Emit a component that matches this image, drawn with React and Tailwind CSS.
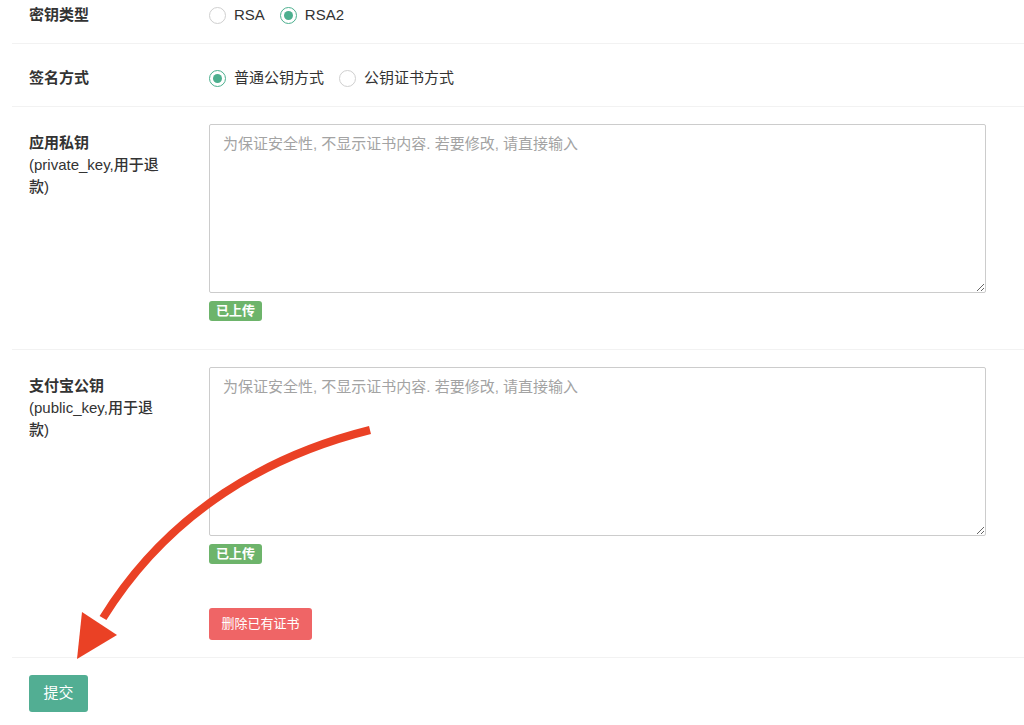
import React from 'react';

const font = { fontFamily: '"Liberation Sans", "Noto Sans CJK SC", sans-serif' };

function Radio({ checked, label }) {
  return (
    <label className="flex items-center mr-[15px] cursor-pointer">
      <span
        className={`w-[17px] h-[17px] rounded-full border flex items-center justify-center mr-[8px] bg-white ${
          checked ? 'border-[#4caf8e]' : 'border-[#cfcfcf]'
        }`}
      >
        {checked && <span className="w-[9px] h-[9px] rounded-full bg-[#4caf8e]" />}
      </span>
      <span className="text-[15px] leading-[20px] text-[#333]">{label}</span>
    </label>
  );
}

function Row({ label, children, className = '', leading = 'leading-[22px]' }) {
  return (
    <div className={`flex border-b border-[#f2f2f2] pl-[17px] ${className}`}>
      <div className={`w-[180px] shrink-0 pr-[40px] text-[15px] font-medium text-[#333] ${leading}`}>
        {label}
      </div>
      <div className="flex-1 pr-[38px]">{children}</div>
    </div>
  );
}

function KeyLabel({ title, sub }) {
  return (
    <div className="pt-[8px]">
      <div className="font-semibold">{title}</div>
      <div>{sub}</div>
    </div>
  );
}

function KeyField({ children }) {
  return (
    <div className="flex flex-col items-start">
      <textarea
        className="w-full h-[169px] border border-[#cccccc] rounded-[2px] px-[13px] py-[8px] text-[15px] leading-[22px] text-[#333] placeholder:text-[#a3a3a3] outline-none"
        placeholder="为保证安全性, 不显示证书内容. 若要修改, 请直接输入"
      />
      <span className="mt-[8px] h-[20px] px-[7px] rounded-[3px] bg-[#6db46b] text-white text-[13px] font-bold leading-[20px]">
        已上传
      </span>
      {children}
    </div>
  );
}

export default function App() {
  return (
    <div className="relative w-[1024px] h-[725px] overflow-hidden bg-white pl-[12px]" style={font}>
      <Row label={<span className="font-semibold">密钥类型</span>} leading="leading-[20px]" className="pt-[5px] pb-[18px] items-center">
        <div className="flex items-center">
          <Radio label="RSA" />
          <Radio checked label="RSA2" />
        </div>
      </Row>
      <Row label={<span className="font-semibold">签名方式</span>} leading="leading-[20px]" className="pt-[24px] pb-[18px] items-center">
        <div className="flex items-center">
          <Radio checked label="普通公钥方式" />
          <Radio label="公钥证书方式" />
        </div>
      </Row>
      <Row label={<KeyLabel title="应用私钥" sub="(private_key,用于退款)" />} className="pt-[17px] pb-[28px]">
        <KeyField />
      </Row>
      <Row label={<KeyLabel title="支付宝公钥" sub="(public_key,用于退款)" />} className="pt-[17px] pb-[17px]">
        <KeyField>
          <button className="mt-[44px] w-[103px] h-[32px] rounded-[3px] bg-[#ef6566] text-white text-[13px]">
            删除已有证书
          </button>
        </KeyField>
      </Row>
      <div className="pl-[17px] pt-[17px]">
        <button className="w-[59px] h-[37px] rounded-[3px] bg-[#52ae93] text-white text-[15px]">提交</button>
      </div>

      {/* annotation arrow */}
      <svg className="absolute left-0 top-0 pointer-events-none" width="1024" height="725">
        <path d="M370 430 C 270 455 170 510 103 618" fill="none" stroke="#ea4125" strokeWidth="8" strokeLinecap="butt" />
        <polygon points="82,612 117,635 77,659" fill="#ea4125" />
      </svg>
    </div>
  );
}
